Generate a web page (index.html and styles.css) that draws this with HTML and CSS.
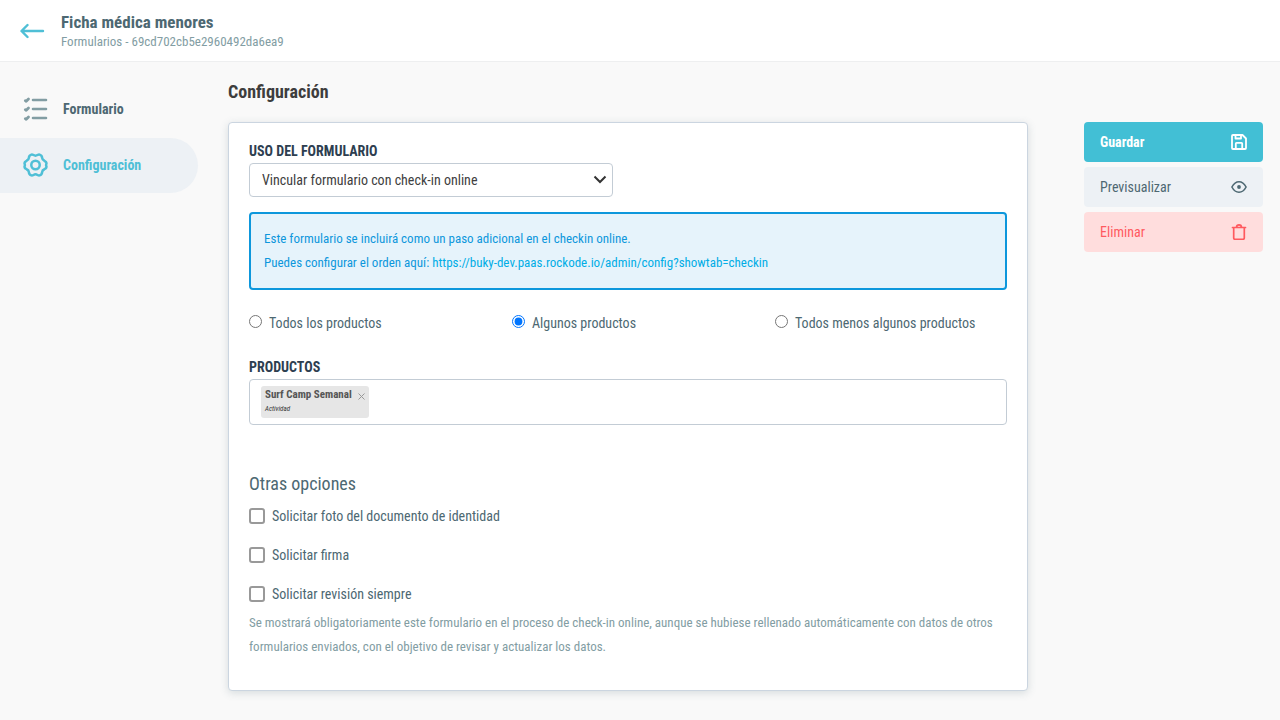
FILE: index.html
```html
<!DOCTYPE html>
<html lang="es">
<head>
  <meta charset="UTF-8">
  <meta name="viewport" content="width=device-width, initial-scale=1">
  <title>Ficha médica menores</title>
  <link rel="stylesheet" href="styles.css">
</head>
<body>
  <header class="header">
    <a href="#" class="back" aria-label="Volver">
      <svg width="25" height="16" viewBox="0 0 25 16" fill="none" stroke="currentColor" stroke-width="2.4" stroke-linecap="round" stroke-linejoin="round">
        <path d="M23 8H2M7.500 2L1.500 8l6 6"/>
      </svg>
    </a>
    <div>
      <h1 class="header-title">Ficha médica menores</h1>
      <p class="header-sub">Formularios - 69cd702cb5e2960492da6ea9</p>
    </div>
  </header>

  <div class="layout">
    <nav class="sidebar">
      <a href="#" class="nav-item">
        <svg class="nav-icon" width="25" height="26" viewBox="0 0 25 26" fill="none" stroke="currentColor" stroke-linecap="round" stroke-linejoin="round">
          <path stroke-width="2.600" d="M10 4h13M10 13h13M10 22h13"/>
          <path stroke-width="2.800" d="M2.300 4.700l.9.600L5.500 3M2.300 13.700l.9.600L5.500 12M2.300 22.700l.9.600L5.500 21"/>
        </svg>
        Formulario
      </a>
      <a href="#" class="nav-item active">
        <svg class="nav-icon" width="25" height="26" viewBox="0 0 26 26" fill="none" stroke="currentColor" stroke-width="2.6" stroke-linejoin="round">
          <path d="M8.700 2.200C10.500 1.700 11 3.300 13 3.300s2.500-1.600 4.300-1.100c2.300.7 2.500 1.900 2.600 3.400.1 1.700 1 2.400 2.400 3 1.700.8 2.400 2.200 1.900 3.500-.3.800-.3 1 0 1.800.5 1.300-.2 2.700-1.900 3.500-1.400.6-2.300 1.300-2.400 3-.1 1.500-.3 2.700-2.600 3.400-1.800.5-2.300-1.100-4.300-1.100s-2.500 1.600-4.300 1.100c-2.300-.7-2.500-1.900-2.600-3.400-.1-1.700-1-2.400-2.400-3C2 16.600 1.300 15.200 1.800 13.900c.3-.8.3-1 0-1.800C1.300 10.800 2 9.400 3.700 8.600c1.400-.6 2.300-1.300 2.400-3 .1-1.500.3-2.700 2.600-3.400z"/>
          <circle cx="13" cy="13" r="4.400"/>
        </svg>
        Configuración
      </a>
    </nav>

    <main class="content">
      <h2 class="content-title">Configuración</h2>
      <form class="card" id="configForm">
        <label class="field-label" for="uso">USO DEL FORMULARIO</label>
        <div class="select-wrap">
          <select id="uso" class="select">
            <option>Vincular formulario con check-in online</option>
          </select>
          <svg class="select-arrow" width="14" height="10" viewBox="0 0 14 10" fill="none" stroke="currentColor" stroke-width="2">
            <path d="M1.500 1.500L7 7l5.500-5.500"/>
          </svg>
        </div>

        <div class="notice">
          <p>Este formulario se incluirá como un paso adicional en el checkin online.</p>
          <p>Puedes configurar el orden aquí: <a href="#">https://buky-dev.paas.rockode.io/admin/config?showtab=checkin</a></p>
        </div>

        <div class="radios">
          <div class="radio">
            <input type="radio" name="productos" id="todos">
            <label for="todos">Todos los productos</label>
          </div>
          <div class="radio">
            <input type="radio" name="productos" id="algunos" checked>
            <label for="algunos">Algunos productos</label>
          </div>
          <div class="radio">
            <input type="radio" name="productos" id="menos">
            <label for="menos">Todos menos algunos productos</label>
          </div>
        </div>

        <label class="field-label" for="buscar">PRODUCTOS</label>
        <div class="tags">
          <div class="tag">
            <div>
              <div class="tag-name">Surf Camp Semanal</div>
              <div class="tag-type">Actividad</div>
            </div>
            <button type="button" class="tag-remove" aria-label="Quitar">
              <svg width="7" height="7" viewBox="0 0 7 7" stroke="currentColor" stroke-width="1">
                <path d="M.5.5l6 6M6.500.5l-6 6"/>
              </svg>
            </button>
          </div>
          <input type="text" id="buscar" class="tags-input">
        </div>

        <h3 class="subtitle">Otras opciones</h3>
        <div class="check">
          <input type="checkbox" id="foto">
          <label for="foto">Solicitar foto del documento de identidad</label>
        </div>
        <div class="check">
          <input type="checkbox" id="firma">
          <label for="firma">Solicitar firma</label>
        </div>
        <div class="check">
          <input type="checkbox" id="revision">
          <label for="revision">Solicitar revisión siempre</label>
        </div>
        <p class="help">Se mostrará obligatoriamente este formulario en el proceso de check-in online, aunque se hubiese rellenado automáticamente con datos de otros formularios enviados, con el objetivo de revisar y actualizar los datos.</p>
      </form>
    </main>

    <aside class="actions">
      <button type="submit" form="configForm" class="btn btn-save">
        Guardar
        <svg width="16" height="16" viewBox="0 0 16 16" fill="none" stroke="currentColor" stroke-width="1.800" stroke-linejoin="round">
          <path d="M1 2a1 1 0 0 1 1-1h9.500L15 4.500V14a1 1 0 0 1-1 1H2a1 1 0 0 1-1-1z"/>
          <path d="M4.800 15V9.500a.7.7 0 0 1 .7-.7h5a.7.7 0 0 1 .7.7V15M4.500 1v3.500h5.500V1"/>
        </svg>
      </button>
      <button type="button" class="btn btn-preview">
        Previsualizar
        <svg width="16" height="16" viewBox="0 0 16 16" fill="none" stroke="currentColor" stroke-width="1.600">
          <path d="M.9 8C2.700 4.600 5 2.700 8 2.700s5.300 1.900 7.100 5.300c-1.800 3.400-4.100 5.300-7.100 5.300S2.700 11.400.9 8z" stroke-linejoin="round"/>
          <circle cx="8" cy="8" r="1.900" fill="currentColor" stroke="none"/>
        </svg>
      </button>
      <button type="button" class="btn btn-delete">
        Eliminar
        <svg width="16" height="16" viewBox="0 0 16 16" fill="none" stroke="currentColor" stroke-width="1.700" stroke-linecap="round" stroke-linejoin="round">
          <path d="M1.500 3.500h13M2.700 3.500V14a1.300 1.300 0 0 0 1.300 1.300h8a1.300 1.300 0 0 0 1.300-1.300V3.500M5.500 3.500C5.500 1.600 6.500.9 8 .9s2.500.7 2.500 2.600"/>
        </svg>
      </button>
    </aside>
  </div>
</body>
</html>
```
FILE: styles.css
```css
* {
  box-sizing: border-box;
}

body {
  margin: 0;
  background-color: #f9f9f9;
  color: #4d6872;
  font-family: "Roboto Condensed", "Liberation Sans Narrow", Roboto, sans-serif;
  font-size: 14px;
  line-height: 20px;
}

h1, h2, h3, p {
  margin: 0;
}

a {
  text-decoration: none;
}

input, select, button {
  font: inherit;
  color: inherit;
}

/* header */
.header {
  display: flex;
  align-items: center;
  gap: 16px;
  height: 62px;
  padding: 0 20px;
  background-color: #fff;
  border-bottom: 1px solid #eeeff0;
}

.back {
  display: flex;
  color: #4fbfd6;
}

.header-title {
  font-size: 17px;
  font-weight: 700;
  line-height: 22px;
  color: #4d6872;
}

.header-sub {
  font-size: 13px;
  line-height: 18px;
  color: #829da3;
}

.layout {
  display: flex;
  align-items: flex-start;
  padding-right: 17px;
}

/* sidebar */
.sidebar {
  display: flex;
  flex-direction: column;
  gap: 1px;
  width: 198px;
  padding-top: 20px;
  margin-right: 30px;
}

.nav-item {
  display: flex;
  align-items: center;
  gap: 15px;
  height: 55px;
  padding: 0 0 1px 23px;
  font-weight: 700;
  color: #4d6872;
  border-radius: 0 28px 28px 0;
}

.nav-item .nav-icon {
  color: #829da3;
}

.nav-item.active,
.nav-item.active .nav-icon {
  color: #4fbfd6;
}

.nav-item.active {
  background-color: #edf1f5;
}

/* content */
.content {
  flex: 1;
  min-width: 0;
  padding-top: 18px;
}

.content-title {
  margin-bottom: 18px;
  font-size: 18px;
  line-height: 24px;
  color: #3d3d3d;
}

.card {
  padding: 18px 20px 31px;
  margin-bottom: 29px;
  background-color: #fff;
  border: 1px solid #cbd5e0;
  border-radius: 4px;
  box-shadow: 0 2px 8px rgba(77, 104, 114, 0.2);
}

.field-label {
  display: block;
  padding-bottom: 2px;
  font-weight: 700;
  color: #2d3e50;
}

.select-wrap {
  position: relative;
  width: 48%;
}

.select {
  display: block;
  width: 100%;
  height: 34px;
  padding: 0 12px;
  color: #404040;
  background-color: #fff;
  border: 1px solid #c3ccd5;
  border-radius: 4px;
  appearance: none;
}

.select-arrow {
  position: absolute;
  top: 12px;
  right: 6px;
  color: #333;
  pointer-events: none;
}

.notice {
  margin-top: 15px;
  padding: 13px;
  font-size: 13px;
  line-height: 24px;
  color: #0d97dc;
  background-color: #e6f3fb;
  border: 2px solid #0d97dc;
  border-radius: 4px;
}

.notice a {
  color: #00ade6;
}

.radios {
  display: grid;
  grid-template-columns: repeat(3, 1fr);
  gap: 31px;
  margin: 23px 0 24px;
}

.radio {
  display: flex;
  align-items: flex-start;
  gap: 7px;
  white-space: nowrap;
}

.radio input {
  width: 13px;
  height: 13px;
  margin: 2px 0 0;
}

.tags {
  display: flex;
  align-items: center;
  min-height: 46px;
  padding: 6px 11px;
  background-color: #fff;
  border: 1px solid #c3ccd5;
  border-radius: 4px;
}

.tag {
  display: flex;
  gap: 6px;
  padding: 2px 4px;
  background-color: #e6e6e6;
  border-radius: 3px;
}

.tag-name {
  font-size: 11px;
  font-weight: 700;
  line-height: 14px;
  color: #555;
}

.tag-type {
  font-size: 7px;
  font-style: italic;
  line-height: 14px;
  color: #333;
}

.tag-remove {
  display: flex;
  align-self: flex-start;
  margin-top: 5px;
  padding: 0;
  color: #999;
  background: none;
  border: 0;
}

.tags-input {
  flex: 1;
  min-width: 0;
  border: 0;
  outline: 0;
  background: none;
}

.subtitle {
  margin: 47px 0 10px;
  font-size: 18px;
  font-weight: 400;
  line-height: 24px;
}

.check {
  display: flex;
  align-items: center;
  gap: 7px;
  margin-bottom: 19px;
}

.check input {
  width: 16px;
  height: 16px;
  margin: 0;
  background-color: #fff;
  border: 2px solid #999;
  border-radius: 3px;
  appearance: none;
}

.check input:checked {
  background-color: #4fbfd6;
}

.help {
  margin-top: -12px;
  font-size: 13px;
  line-height: 24px;
  color: #829da3;
}

/* actions */
.actions {
  display: flex;
  flex-direction: column;
  gap: 5px;
  width: 179px;
  margin-left: 56px;
  padding-top: 60px;
}

.btn {
  display: flex;
  align-items: center;
  justify-content: space-between;
  height: 40px;
  padding: 0 16px;
  border: 0;
  border-radius: 4px;
  cursor: pointer;
}

.btn-save {
  font-weight: 700;
  color: #fff;
  background-color: #42bfd5;
}

.btn-preview {
  color: #4d6872;
  background-color: #edf1f5;
}

.btn-delete {
  color: #ff5a5f;
  background-color: #ffdddd;
}
```
